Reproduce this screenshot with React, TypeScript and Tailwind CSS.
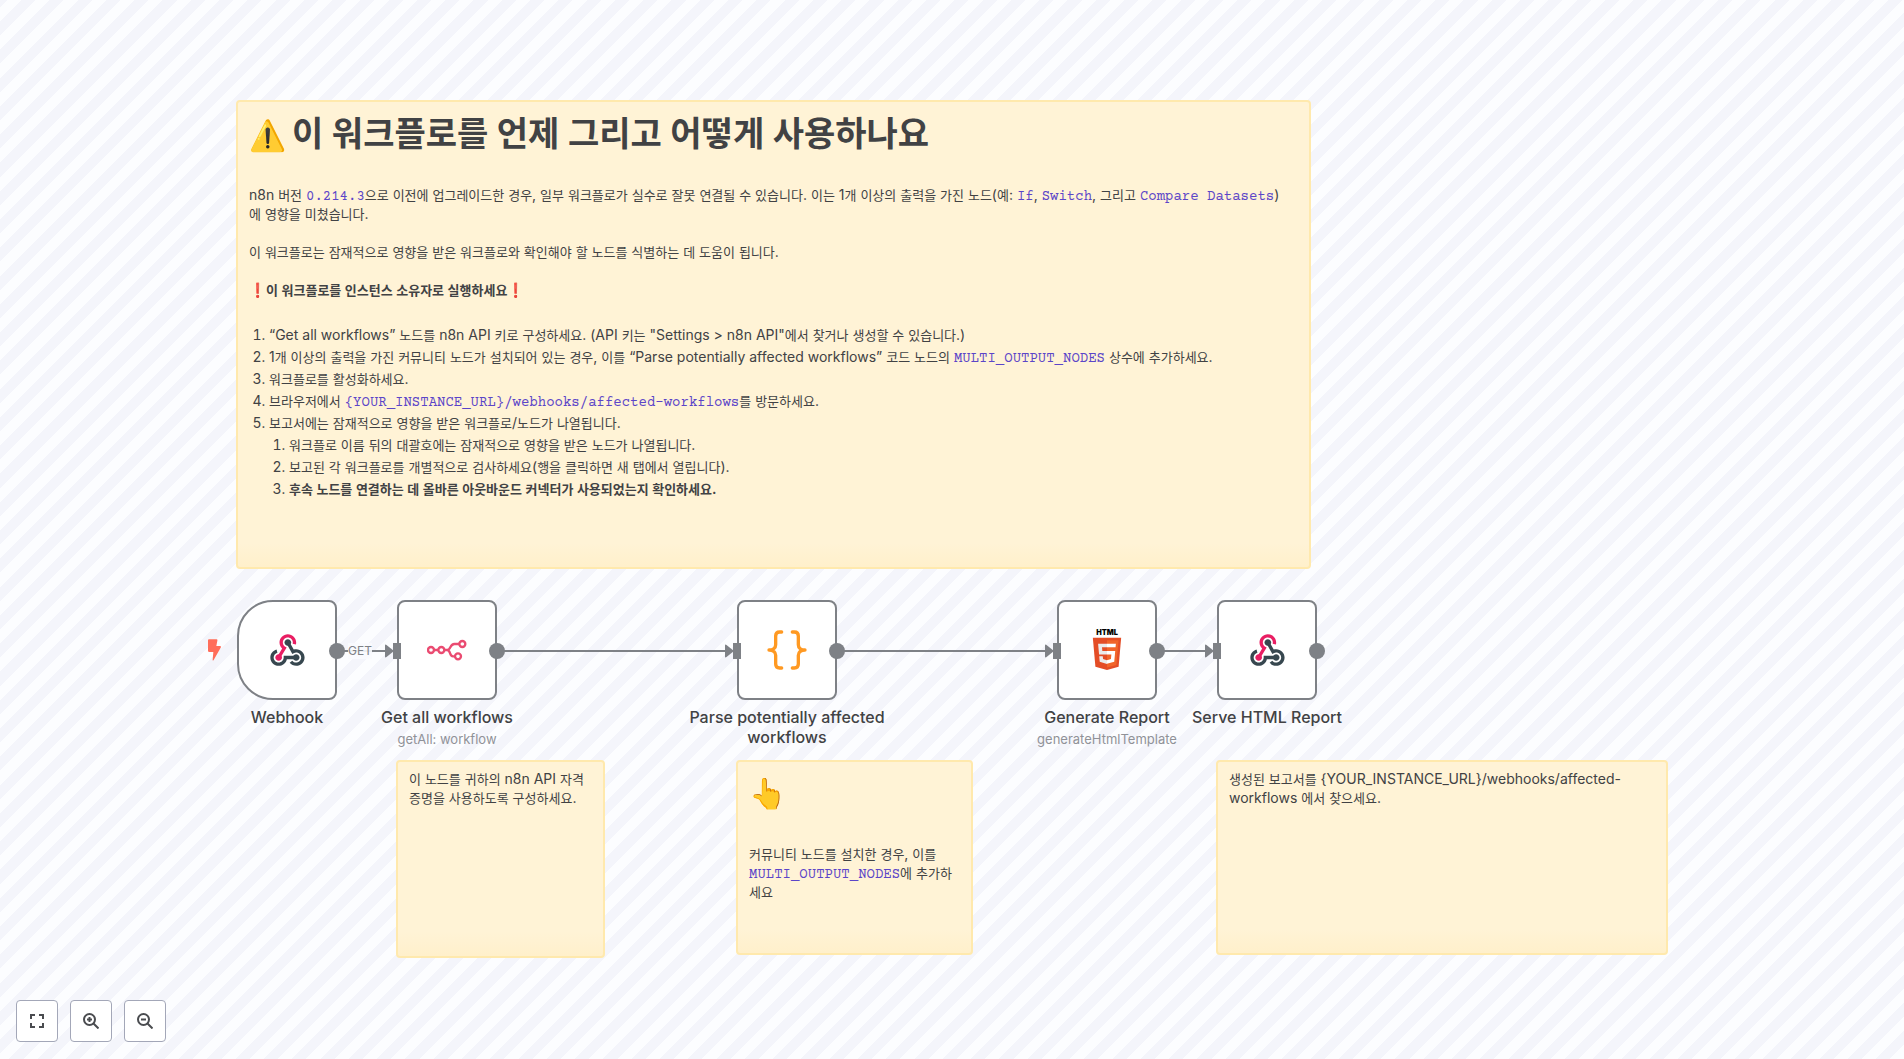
import React from "react";

const HANGUL = /([\uac00-\ud7a3]+)/;

function WebhookIcon() {
  return (
    <svg viewBox="0 0 48 48" className="size-10" aria-hidden="true">
      <path fill="#37474f" d="M35 37c-2.2 0-4-1.8-4-4s1.8-4 4-4 4 1.8 4 4-1.8 4-4 4" />
      <path fill="#37474f" d="M35 43c-3 0-5.9-1.4-7.8-3.7l3.1-2.5c1.1 1.4 2.9 2.3 4.7 2.3 3.3 0 6-2.7 6-6s-2.7-6-6-6c-1 0-2 .3-2.9.7l-1.7 1L23.3 16l3.5-1.9 5.3 9.4c1-.3 2-.5 3-.5 5.5 0 10 4.5 10 10S40.5 43 35 43" />
      <path fill="#37474f" d="M14 43C8.5 43 4 38.5 4 33c0-4.6 3.1-8.5 7.5-9.7l1 3.9C9.9 27.9 8 30.3 8 33c0 3.3 2.7 6 6 6s6-2.7 6-6v-2h15v4H23.8c-.9 4.6-5 8-9.8 8" />
      <path fill="#e91e63" d="M14 37c-2.2 0-4-1.8-4-4s1.8-4 4-4 4 1.8 4 4-1.8 4-4 4" />
      <path fill="#37474f" d="M25 19c-2.2 0-4-1.8-4-4s1.8-4 4-4 4 1.8 4 4-1.8 4-4 4" />
      <path fill="#e91e63" d="m15.7 34-3.4-2 5.9-9.7c-2-1.9-3.2-4.5-3.2-7.3 0-5.5 4.5-10 10-10s10 4.5 10 10c0 .9-.1 1.7-.3 2.5l-3.9-1c.1-.5.2-1 .2-1.5 0-3.3-2.7-6-6-6s-6 2.7-6 6c0 2.1 1.1 4 2.9 5.1l1.7 1z" />
    </svg>
  );
}

function N8nIcon() {
  return (
    <svg viewBox="0 0 120 120" className="size-10" fill="none" stroke="#ea4b71" strokeWidth="7" aria-hidden="true">
      <circle cx="12" cy="60" r="9" />
      <circle cx="43" cy="60" r="9" />
      <circle cx="106" cy="42" r="9" />
      <circle cx="93" cy="79" r="9" />
      <path d="M21 60h13M52 60h8c12 0 8-18 22-18h15M60 60c12 0 6 19 18 19h6" />
    </svg>
  );
}

function BracesIcon() {
  return (
    <svg viewBox="0 0 120 120" className="size-10" fill="none" stroke="#ff9922" strokeWidth="10" strokeLinecap="round" strokeLinejoin="round" aria-hidden="true">
      <path d="M44 6h-6c-8 0-12 4-12 12v26c0 9-7 16-20 16c13 0 20 7 20 16v26c0 8 4 12 12 12h6" />
      <path d="M76 6h6c8 0 12 4 12 12v26c0 9 7 16 20 16c-13 0-20 7-20 16v26c0 8-4 12-12 12h-6" />
    </svg>
  );
}

function HtmlIcon() {
  return (
    <svg viewBox="0 0 512 512" className="size-10 overflow-visible" aria-hidden="true">
      <text x="256" y="69" textAnchor="middle" fontFamily="Inter, sans-serif" fontWeight="900" fontSize="94" fill="#000">HTML</text>
      <path fill="#e44d26" d="M107.600 471l-33-370.400h362.800l-33 370.200L255.700 512" />
      <path fill="#f16529" d="M256 480.500V131h148.300L376 447" />
      <path fill="#ebebeb" d="M142 176.300h114v45.400h-64.200l4.200 46.500h60v45.300H154.400M156.400 336.300H202l3.200 36.300 50.800 13.600v47.400l-93.200-26" />
      <path fill="#fff" d="M369.600 176.300H255.800v45.400h109.600M361.300 268.200H255.800v45.400h56l-5.300 59-50.700 13.600v47.200l93-25.800" />
    </svg>
  );
}

/* Hangul glyphs are wide next to Inter, so their runs are set one pixel smaller. */
function Ko({ children }: { children: string }) {
  return (
    <>
      {children.split(HANGUL).map((run, i) =>
        i % 2 === 1 ? (
          <span key={i} lang="ko" className="text-[13px] leading-none">
            {run}
          </span>
        ) : (
          run
        ),
      )}
    </>
  );
}

function Code({ children }: { children: string }) {
  return (
    <code className="font-['Courier_Prime','Liberation_Mono',monospace] text-sm leading-none text-[#5b45c8]">
      {children}
    </code>
  );
}

function Note({ place, children }: { place: string; children: React.ReactNode }) {
  return (
    <section
      className={`absolute overflow-hidden rounded border-2 border-[#ffe9ad] bg-[linear-gradient(to_top,#fff0cb,#fff3d6_24px)] px-[11px] text-sm leading-[19px] text-[#414244] ${place}`}
    >
      {children}
    </section>
  );
}

type NodeProps = {
  place: string;
  name: string;
  detail?: string;
  trigger?: boolean;
  children: React.ReactNode;
};

function WorkflowNode({ place, name, detail, trigger, children }: NodeProps) {
  return (
    <article className={`absolute top-[600px] size-[100px] ${place}`}>
      <div
        className={`flex size-full items-center justify-center border-2 border-[#7e8186] bg-white ${
          trigger ? "rounded-l-[36px] rounded-r-lg" : "rounded-lg"
        }`}
      >
        {children}
      </div>
      {trigger ? (
        <svg viewBox="0 0 39 64" className="absolute top-[39px] -left-[29px] h-[22px] w-[13px]" aria-hidden="true">
          <path fill="#ff6d5a" d="M3 0h23q3 0 2 4l-3 16h11q5 0 2 5L17 62q-3 4-3-1l2-23H4q-4 0-4-4V3q0-3 3-3z" />
        </svg>
      ) : (
        <span className="absolute top-[43px] -left-1 h-4 w-2 bg-[#7e8186]" />
      )}
      <span className="absolute top-[43px] -right-2 size-4 rounded-full bg-[#7e8186]" />
      <div className="absolute top-[107px] left-1/2 flex w-[200px] -translate-x-1/2 flex-col items-center text-center">
        <h2 className="text-base leading-5 font-medium text-[#414244]">{name}</h2>
        {detail && <p className="mt-0.5 text-[13px] leading-5 text-[#909298]">{detail}</p>}
      </div>
    </article>
  );
}

function Edge({ place, label }: { place: string; label?: string }) {
  return (
    <div className={`absolute top-[643px] flex h-4 items-center ${place}`}>
      <span className="h-0.5 grow bg-[#7e8186]" />
      {label && (
        <span className="absolute left-1 bg-[#fafbfe]/90 text-xs leading-4 text-[#7e8186]">{label}</span>
      )}
      <svg viewBox="0 0 9 14" className="h-3.5 w-[9px]" aria-hidden="true">
        <path fill="#7e8186" d="M0 1.500Q0 0 1.500 1L9 7l-7.500 6Q0 14 0 12.500z" />
      </svg>
    </div>
  );
}

function ControlButton({ label, children }: { label: string; children: React.ReactNode }) {
  return (
    <button
      type="button"
      aria-label={label}
      className="flex size-[42px] items-center justify-center rounded border border-[#a3a7b8] bg-white text-[#4a4c50]"
    >
      <svg viewBox="0 0 16 16" className="size-4" fill="none" stroke="currentColor" strokeWidth="2" aria-hidden="true">
        {children}
      </svg>
    </button>
  );
}

export default function App() {
  return (
    <main className="relative min-h-screen overflow-hidden bg-[repeating-linear-gradient(-45deg,#fcfdff,#fcfdff_10px,#f4f5fb_10px,#f4f5fb_20px)] font-[Inter,'Noto_Sans_CJK_KR',sans-serif]">
      <Note place="top-[100px] left-[236px] h-[469px] w-[1075px]">
        <h1 className="mt-2 text-[34px] leading-[48px] font-semibold">
          <span className="mr-1.5 text-[30px]">⚠️</span>이 워크플로를 언제 그리고 어떻게 사용하나요
        </h1>
        <p className="mt-[26px] pr-3">
          <Ko>n8n 버전 </Ko>
          <Code>0.214.3</Code>
          <Ko>으로 이전에 업그레이드한 경우, 일부 워크플로가 실수로 잘못 연결될 수 있습니다. 이는 1개 이상의 출력을 가진 노드(예: </Ko>
          <Code>If</Code>, <Code>Switch</Code>
          <Ko>, 그리고 </Ko>
          <Code>Compare Datasets</Code>
          <Ko>)에 영향을 미쳤습니다.</Ko>
        </p>
        <p className="mt-[19px]">
          <Ko>이 워크플로는 잠재적으로 영향을 받은 워크플로와 확인해야 할 노드를 식별하는 데 도움이 됩니다.</Ko>
        </p>
        <p className="mt-[19px] font-semibold">
          <Ko>❗️이 워크플로를 인스턴스 소유자로 실행하세요❗️</Ko>
        </p>
        <ol className="mt-[26px] list-decimal space-y-[3px] pl-5">
          <li>
            <Ko>{'“Get all workflows” 노드를 n8n API 키로 구성하세요. (API 키는 "Settings > n8n API"에서 찾거나 생성할 수 있습니다.)'}</Ko>
          </li>
          <li>
            <Ko>1개 이상의 출력을 가진 커뮤니티 노드가 설치되어 있는 경우, 이를 “Parse potentially affected workflows” 코드 노드의 </Ko>
            <Code>MULTI_OUTPUT_NODES</Code>
            <Ko> 상수에 추가하세요.</Ko>
          </li>
          <li>
            <Ko>워크플로를 활성화하세요.</Ko>
          </li>
          <li>
            <Ko>브라우저에서 </Ko>
            <Code>{"{YOUR_INSTANCE_URL}/webhooks/affected-workflows"}</Code>
            <Ko>를 방문하세요.</Ko>
          </li>
          <li>
            <Ko>보고서에는 잠재적으로 영향을 받은 워크플로/노드가 나열됩니다.</Ko>
            <ol className="mt-[3px] list-decimal space-y-[3px] pl-5">
              <li>
                <Ko>워크플로 이름 뒤의 대괄호에는 잠재적으로 영향을 받은 노드가 나열됩니다.</Ko>
              </li>
              <li>
                <Ko>보고된 각 워크플로를 개별적으로 검사하세요(행을 클릭하면 새 탭에서 열립니다).</Ko>
              </li>
              <li>
                <strong className="font-semibold">
                  <Ko>후속 노드를 연결하는 데 올바른 아웃바운드 커넥터가 사용되었는지 확인하세요.</Ko>
                </strong>
              </li>
            </ol>
          </li>
        </ol>
      </Note>

      <Note place="top-[760px] left-[396px] h-[198px] w-[209px]">
        <p className="mt-[7px]">
          <Ko>이 노드를 귀하의 n8n API 자격 증명을 사용하도록 구성하세요.</Ko>
        </p>
      </Note>
      <Note place="top-[760px] left-[736px] h-[195px] w-[237px]">
        <p className="mt-[7px] text-[30px] leading-[48px]">👆</p>
        <p className="mt-[27px]">
          <Ko>커뮤니티 노드를 설치한 경우, 이를 </Ko>
          <Code>MULTI_OUTPUT_NODES</Code>
          <Ko>에 추가하세요</Ko>
        </p>
      </Note>
      <Note place="top-[760px] left-[1216px] h-[195px] w-[452px]">
        <p className="mt-[7px]">
          <Ko>{"생성된 보고서를 {YOUR_INSTANCE_URL}/webhooks/affected-workflows 에서 찾으세요."}</Ko>
        </p>
      </Note>

      <Edge place="left-[344px] w-[50px]" label="GET" />
      <Edge place="left-[504px] w-[230px]" />
      <Edge place="left-[844px] w-[210px]" />
      <Edge place="left-[1164px] w-[50px]" />

      <WorkflowNode place="left-[237px]" name="Webhook" trigger>
        <WebhookIcon />
      </WorkflowNode>
      <WorkflowNode place="left-[397px]" name="Get all workflows" detail="getAll: workflow">
        <N8nIcon />
      </WorkflowNode>
      <WorkflowNode place="left-[737px]" name="Parse potentially affected workflows">
        <BracesIcon />
      </WorkflowNode>
      <WorkflowNode place="left-[1057px]" name="Generate Report" detail="generateHtmlTemplate">
        <HtmlIcon />
      </WorkflowNode>
      <WorkflowNode place="left-[1217px]" name="Serve HTML Report">
        <WebhookIcon />
      </WorkflowNode>

      <nav aria-label="Canvas controls" className="absolute bottom-[17px] left-4 flex gap-3">
        <ControlButton label="Zoom to fit">
          <path d="M2 6V2h4M10 2h4v4M14 10v4h-4M6 14H2v-4" />
        </ControlButton>
        <ControlButton label="Zoom in">
          <circle cx="6.500" cy="6.500" r="5.500" />
          <path d="M10.500 10.500l5 5M6.500 4v5M4 6.500h5" />
        </ControlButton>
        <ControlButton label="Zoom out">
          <circle cx="6.500" cy="6.500" r="5.500" />
          <path d="M10.500 10.500l5 5M4 6.500h5" />
        </ControlButton>
      </nav>
    </main>
  );
}
